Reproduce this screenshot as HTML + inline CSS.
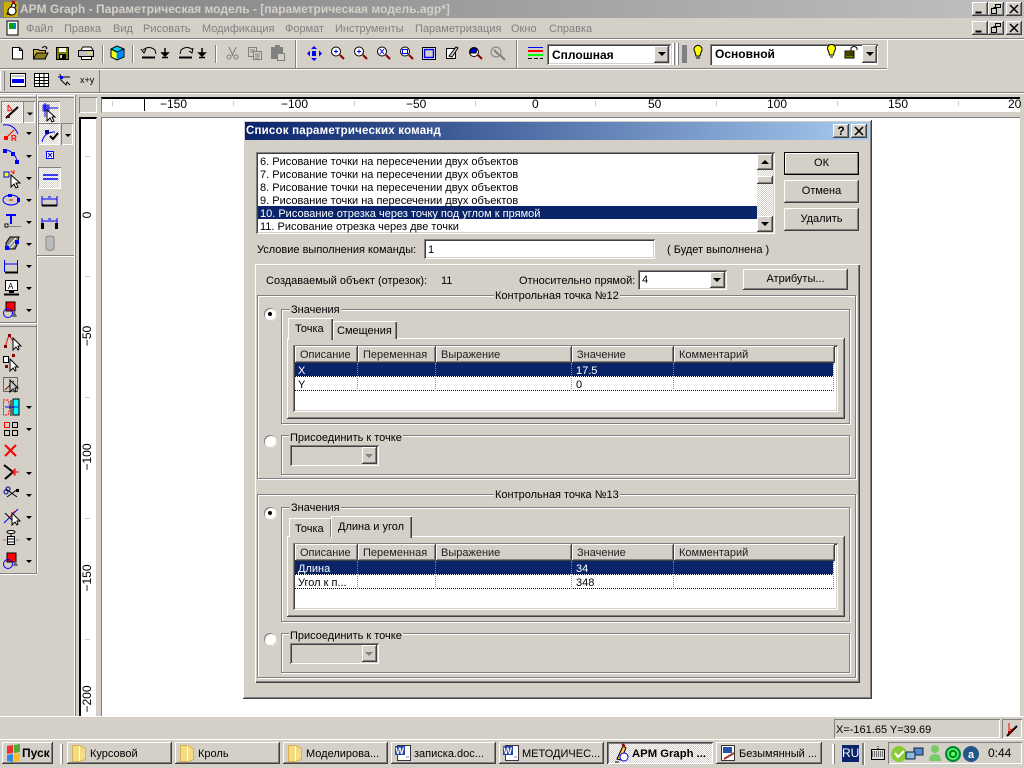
<!DOCTYPE html>
<html lang="ru"><head><meta charset="utf-8"><title>APM Graph</title>
<style>
html,body{margin:0;padding:0;width:1024px;height:768px;overflow:hidden;background:#d4d0c8}
body{position:relative;font:11px/14px "Liberation Sans",sans-serif;color:#000}
div,span.t{position:absolute;box-sizing:border-box}
.t{position:absolute;white-space:nowrap;line-height:14px;margin-top:1px}
.t.r,.t.b{margin-top:0}
.r{font-size:12px}
.up{background:#d4d0c8;box-shadow:inset -1px -1px #404040,inset 1px 1px #fff,inset -2px -2px #808080}
.sk{background:#fff;box-shadow:inset 1px 1px #808080,inset -1px -1px #fff,inset 2px 2px #404040,inset -2px -2px #d4d0c8}
.fr{border:1px solid #808080;box-shadow:1px 1px #fff,inset 1px 1px #fff}
.lbl{background:#d4d0c8;padding:0 1px}
.g{color:#808080}
.btn{text-align:center;line-height:21px}
.h{background:#d4d0c8;height:17px;box-shadow:inset -1px -1px #404040,inset 1px 1px #fff,inset -2px -2px #808080;padding-left:5px;line-height:19px;color:#222}
.tb{height:22px;background:#d4d0c8;box-shadow:inset -1px -1px #404040,inset 1px 1px #fff,inset -2px -2px #808080;line-height:21px}
.dot{border-bottom:1px dotted #000}
.vd{width:0;border-left:1px dotted #000}
.rt{position:absolute;transform:rotate(-90deg);white-space:nowrap;line-height:14px;text-align:center;width:40px;left:67px;font-size:12px}
</style></head><body>

<!-- title bar -->
<div style="left:0;top:0;width:1024px;height:18px;background:linear-gradient(90deg,#808080,#c0c0c0)"></div>
<span class="t b" style="left:20px;top:2px;font-weight:bold;font-size:12px;color:#d4d0c8">APM Graph - Параметрическая модель - [параметрическая модель.agp*]</span>
<div class="up" style="left:972px;top:2px;width:16px;height:14px"></div>
<div class="up" style="left:988px;top:2px;width:16px;height:14px"></div>
<div class="up" style="left:1006px;top:2px;width:16px;height:14px"></div>
<div class="up" style="left:972px;top:21px;width:16px;height:14px"></div>
<div class="up" style="left:988px;top:21px;width:16px;height:14px"></div>
<div class="up" style="left:1006px;top:21px;width:16px;height:14px"></div>

<!-- menu -->
<span class="t g" style="left:26px;top:21px">Файл</span>
<span class="t g" style="left:64px;top:21px">Правка</span>
<span class="t g" style="left:113px;top:21px">Вид</span>
<span class="t g" style="left:143px;top:21px">Рисовать</span>
<span class="t g" style="left:202px;top:21px">Модификация</span>
<span class="t g" style="left:285px;top:21px">Формат</span>
<span class="t g" style="left:335px;top:21px">Инструменты</span>
<span class="t g" style="left:415px;top:21px">Параметризация</span>
<span class="t g" style="left:511px;top:21px">Окно</span>
<span class="t g" style="left:549px;top:21px">Справка</span>

<!-- toolbar lines -->
<div style="left:0;top:38px;width:1024px;height:1px;background:#808080"></div>
<div style="left:0;top:39px;width:1024px;height:1px;background:#fff"></div>
<div style="left:0;top:68px;width:887px;height:1px;background:#808080"></div>
<div style="left:0;top:69px;width:887px;height:1px;background:#fff"></div>
<div style="left:887px;top:40px;width:1px;height:29px;background:#fff"></div>
<div style="left:295px;top:40px;width:1px;height:28px;background:#808080"></div>
<div style="left:296px;top:40px;width:1px;height:28px;background:#fff"></div>
<div style="left:516px;top:40px;width:1px;height:28px;background:#808080"></div>
<div style="left:517px;top:40px;width:1px;height:28px;background:#fff"></div>
<div style="left:102px;top:45px;width:1px;height:18px;background:#808080"></div>
<div style="left:103px;top:45px;width:1px;height:18px;background:#fff"></div>
<div style="left:132px;top:45px;width:1px;height:18px;background:#808080"></div>
<div style="left:133px;top:45px;width:1px;height:18px;background:#fff"></div>
<div style="left:215px;top:45px;width:1px;height:18px;background:#808080"></div>
<div style="left:216px;top:45px;width:1px;height:18px;background:#fff"></div>
<div style="left:1px;top:71px;width:3px;height:20px;background:#d4d0c8;box-shadow:-1px 0 #fff,1px 0 #808080"></div>
<div style="left:99px;top:70px;width:1px;height:22px;background:#808080"></div>
<div style="left:0;top:92px;width:1024px;height:1px;background:#808080"></div>
<div style="left:0;top:93px;width:1024px;height:1px;background:#fff"></div>

<!-- combos on toolbar -->
<div class="sk" style="left:547px;top:44px;width:124px;height:21px"></div>
<span class="t b" style="left:552px;top:48px;font-weight:bold;font-size:12px">Сплошная</span>
<div class="up" style="left:654px;top:46px;width:15px;height:17px"></div>
<div style="left:672px;top:43px;width:2px;height:22px;background:#fff;box-shadow:1px 0 #808080"></div>
<div style="left:676px;top:43px;width:2px;height:22px;background:#fff;box-shadow:1px 0 #808080"></div>
<div style="left:682px;top:45px;width:5px;height:18px;background:#808080"></div>
<div class="sk" style="left:710px;top:44px;width:168px;height:21px;box-shadow:inset 1px 1px #808080,inset 2px 2px #404040,inset -1px -1px #fff"></div>
<span class="t b" style="left:715px;top:47px;font-weight:bold;font-size:12px">Основной</span>
<div class="up" style="left:862px;top:45px;width:15px;height:18px"></div>

<!-- rulers -->
<div class="up" style="left:79px;top:97px;width:18px;height:16px;box-shadow:inset 1px 1px #808080,inset -1px -1px #fff"></div>
<div style="left:101px;top:97px;width:919px;height:16px;background:#fff;border-top:2px solid #000;border-left:1px solid #808080;border-bottom:1px solid #d4d0c8"></div>
<div style="left:79px;top:117px;width:18px;height:599px;background:#fff;border-top:2px solid #000;border-left:2px solid #000;border-right:1px solid #d4d0c8"></div>
<div style="left:101px;top:117px;width:919px;height:599px;background:#fff;box-shadow:inset 1px 1px #808080"></div>
<div style="left:144px;top:97px;width:1px;height:14px;background:#000"></div>
<div style="left:112px;top:101px;width:1px;height:5px;background:#ccc"></div>
<div style="left:233px;top:101px;width:1px;height:5px;background:#ccc"></div>
<div style="left:354px;top:101px;width:1px;height:5px;background:#ccc"></div>
<div style="left:475px;top:101px;width:1px;height:5px;background:#ccc"></div>
<div style="left:595px;top:101px;width:1px;height:5px;background:#ccc"></div>
<div style="left:716px;top:101px;width:1px;height:5px;background:#ccc"></div>
<div style="left:837px;top:101px;width:1px;height:5px;background:#ccc"></div>
<div style="left:958px;top:101px;width:1px;height:5px;background:#ccc"></div>
<span class="t r" style="left:160px;top:97px">−150</span>
<span class="t r" style="left:281px;top:97px">−100</span>
<span class="t r" style="left:406px;top:97px">−50</span>
<span class="t r" style="left:532px;top:97px">0</span>
<span class="t r" style="left:648px;top:97px">50</span>
<span class="t r" style="left:767px;top:97px">100</span>
<span class="t r" style="left:888px;top:97px">150</span>
<span class="t r" style="left:1008px;top:97px">20</span>
<div style="left:85px;top:156px;width:5px;height:1px;background:#ccc"></div>
<div style="left:85px;top:276px;width:5px;height:1px;background:#ccc"></div>
<div style="left:85px;top:397px;width:5px;height:1px;background:#ccc"></div>
<div style="left:85px;top:518px;width:5px;height:1px;background:#ccc"></div>
<div style="left:85px;top:639px;width:5px;height:1px;background:#ccc"></div>
<span class="rt" style="top:208px">0</span>
<span class="rt" style="top:329px">−50</span>
<span class="rt" style="top:450px">−100</span>
<span class="rt" style="top:571px">−150</span>
<span class="rt" style="top:692px">−200</span>

<!-- left toolbars -->
<div style="left:0;top:95px;width:74px;height:1px;background:#fff"></div>
<div style="left:0;top:97px;width:74px;height:1px;background:#808080"></div>
<div style="left:36px;top:95px;width:1px;height:478px;background:#808080"></div>
<div style="left:37px;top:95px;width:1px;height:478px;background:#fff"></div>
<div style="left:74px;top:95px;width:1px;height:621px;background:#fff"></div>
<div style="left:75px;top:95px;width:1px;height:621px;background:#808080"></div>
<div style="left:37px;top:255px;width:37px;height:1px;background:#808080"></div>
<div style="left:37px;top:256px;width:37px;height:1px;background:#fff"></div>
<div style="left:0;top:322px;width:37px;height:1px;background:#808080"></div>
<div style="left:0;top:323px;width:37px;height:1px;background:#fff"></div>
<div style="left:0;top:326px;width:37px;height:1px;background:#808080"></div>
<div style="left:0;top:573px;width:37px;height:1px;background:#808080"></div>
<div style="left:0;top:574px;width:37px;height:1px;background:#fff"></div>
<div style="left:1px;top:101px;width:22px;height:22px;background:repeating-conic-gradient(#fff 0 25%,#d4d0c8 0 50%) 0 0/2px 2px;box-shadow:inset 1px 1px #808080,inset -1px -1px #fff"></div>
<div style="left:23px;top:101px;width:12px;height:22px;box-shadow:inset 1px 1px #808080,inset -1px -1px #fff"></div>
<div style="left:38px;top:101px;width:22px;height:22px;background:repeating-conic-gradient(#fff 0 25%,#d4d0c8 0 50%) 0 0/2px 2px;box-shadow:inset 1px 1px #808080,inset -1px -1px #fff"></div>
<div style="left:38px;top:123px;width:22px;height:22px;background:repeating-conic-gradient(#fff 0 25%,#d4d0c8 0 50%) 0 0/2px 2px;box-shadow:inset 1px 1px #808080,inset -1px -1px #fff"></div>
<div style="left:61px;top:123px;width:12px;height:22px;box-shadow:inset 1px 1px #808080,inset -1px -1px #fff"></div>
<div style="left:38px;top:167px;width:23px;height:22px;background:repeating-conic-gradient(#fff 0 25%,#d4d0c8 0 50%) 0 0/2px 2px;box-shadow:inset 1px 1px #808080,inset -1px -1px #fff"></div>

<!-- status bar -->
<div style="left:0;top:716px;width:1024px;height:1px;background:#fff"></div>
<div style="left:834px;top:719px;width:166px;height:19px;box-shadow:inset 1px 1px #808080,inset -1px -1px #fff"></div>
<span class="t" style="left:836px;top:722px">X=-161.65 Y=39.69</span>
<div style="left:1002px;top:719px;width:20px;height:19px;box-shadow:inset 1px 1px #808080,inset -1px -1px #fff"></div>

<!-- taskbar -->
<div style="left:0;top:739px;width:1024px;height:1px;background:#fff"></div>
<div class="tb" style="left:2px;top:742px;width:51px"></div>
<span class="t b" style="left:22px;top:746px;font-weight:bold;font-size:12px">Пуск</span>
<div style="left:60px;top:744px;width:2px;height:20px;background:#fff;box-shadow:1px 0 #808080"></div>
<div class="tb" style="left:67px;top:742px;width:105px"></div><span class="t" style="left:90px;top:746px">Курсовой</span>
<div class="tb" style="left:175px;top:742px;width:105px"></div><span class="t" style="left:198px;top:746px">Кроль</span>
<div class="tb" style="left:283px;top:742px;width:105px"></div><span class="t" style="left:306px;top:746px">Моделирова...</span>
<div class="tb" style="left:391px;top:742px;width:105px"></div><span class="t" style="left:414px;top:746px">записка.doc...</span>
<div class="tb" style="left:499px;top:742px;width:105px"></div><span class="t" style="left:522px;top:746px">МЕТОДИЧЕС...</span>
<div style="left:607px;top:742px;width:106px;height:22px;background:repeating-conic-gradient(#fff 0 25%,#d4d0c8 0 50%) 0 0/2px 2px;box-shadow:inset 1px 1px #404040,inset -1px -1px #fff,inset 2px 2px #808080"></div>
<span class="t b" style="left:632px;top:747px;font-weight:bold;font-size:11.300px">APM Graph ...</span>
<div class="tb" style="left:716px;top:742px;width:106px"></div><span class="t" style="left:739px;top:746px">Безымянный ...</span>
<div style="left:832px;top:744px;width:2px;height:20px;background:#fff;box-shadow:1px 0 #808080"></div>
<div style="left:842px;top:745px;width:17px;height:17px;background:#0a246a;color:#fff;text-align:center;line-height:17px;font-size:12px">RU</div>
<div style="left:862px;top:743px;width:2px;height:22px;background:#808080;box-shadow:1px 0 #fff"></div>
<div style="left:888px;top:742px;width:134px;height:22px;box-shadow:inset 1px 1px #808080,inset -1px -1px #fff"></div>
<span class="t b" style="left:988px;top:746px;font-size:12px">0:44</span>

<!-- Toolbar / app icon layer -->
<svg style="position:absolute;left:0;top:0" width="1024" height="768" viewBox="0 0 1024 768" fill="none">
<!-- app icons -->
<g><rect x="4" y="2" width="14" height="15" fill="#c8b000"/><path d="M7 14l6-11 3 2-5 10z" fill="#fff" stroke="#000"/><circle cx="12" cy="11" r="4" stroke="#000" fill="#fff"/><path d="M12 1l3 2" stroke="#c00" stroke-width="2"/></g>
<g><rect x="7" y="21" width="11" height="14" fill="#fff" stroke="#000"/><rect x="9" y="23" width="4" height="6" fill="#0a0"/><rect x="13" y="23" width="3" height="6" fill="#08c"/></g>
<!-- window buttons -->
<g stroke="#000"><path d="M975.500 12.500h6M975.500 31.500h6" stroke-width="2"/><path d="M993.500 7.500h7v-3h-5v3M991.500 8.500h5v5h-5zM993.500 26.500h7v-3h-5v3M991.500 27.500h5v5h-5z"/><path d="M1010 5l8 8M1018 5l-8 8M1010 24l8 8M1018 24l-8 8" stroke-width="1.500"/></g>
<!-- new -->
<path d="M12.500 47.500h7l3 3v8.500h-10z" fill="#fff" stroke="#000"/><path d="M19.500 47.500v3h3" stroke="#000"/>
<!-- open -->
<path d="M33.500 49.500h5l1 1h6v8.500h-12z" fill="#c8b34a" stroke="#000"/><path d="M33.500 59l3-6h11.500l-3 6z" fill="#8c7d20" stroke="#000"/><path d="M42 48q3-3 5 0l-1 1" stroke="#000"/>
<!-- save -->
<rect x="56.500" y="47.500" width="12" height="12" fill="#808000" stroke="#000"/><rect x="59" y="48" width="7" height="4" fill="#fff"/><rect x="59" y="54" width="7" height="5" fill="#000"/><rect x="60" y="55" width="2" height="3" fill="#d4d0c8"/>
<!-- print -->
<path d="M81 50l2-3h8l2 3" fill="#fff" stroke="#000"/><rect x="78.500" y="50.500" width="15" height="6" fill="#c0c0c0" stroke="#000"/><rect x="81.500" y="56.500" width="10" height="3" fill="#fff" stroke="#000"/><path d="M88 53h4" stroke="#ff0"/>
<!-- cube -->
<path d="M111 49l6-3 7 3v8l-7 3-6-3z" fill="#0cf" stroke="#000"/><path d="M111 49l6 3 7-3" stroke="#000"/><path d="M111.500 50l5 3v6l-5-2.500z" fill="#ff0"/><path d="M117 53l6-3v7l-6 2.500z" fill="#08f"/>
<!-- undo/redo -->
<g stroke="#000"><path d="M143 50q6-5 12 0l1 4M141 49l3 4 2-4" /><path d="M142 57.500h13" stroke-width="2"/><path d="M162 53h6l-3 3zM165 48v5M162 57.500h6" stroke-width="1.500" fill="#000"/>
<path d="M180 54l1-4q6-5 12 0M193 48l-1 5-3-2"/><path d="M179 57.500h13" stroke-width="2"/><path d="M199 53h6l-3 3zM202 48v5M199 57.500h6" stroke-width="1.500" fill="#000"/></g>
<!-- cut copy paste, disabled -->
<g stroke="#808080"><path d="M229 47l4 9M236 47l-4 9"/><circle cx="229" cy="57" r="2"/><circle cx="236" cy="57" r="2"/><rect x="248.500" y="47.500" width="8" height="9" fill="#d4d0c8"/><rect x="253.500" y="51.500" width="8" height="8" fill="#d4d0c8"/><path d="M250 50h5M250 52h3M255 54h5M255 56h5M255 58h4"/></g>
<rect x="271" y="47" width="12" height="12" fill="#808080"/><rect x="275" y="45" width="5" height="3" fill="#808080"/><rect x="277.500" y="53.500" width="7" height="7" fill="#d4d0c8" stroke="#808080"/>
<!-- move -->
<g fill="#00f"><path d="M314 46l3 3h-6zM314 61l3-3h-6zM307 53.500l3-3v6zM322 53.500l-3-3v6z"/><rect x="312" y="51" width="4" height="5"/></g>
<!-- zooms -->
<g id="z" stroke="#000"><circle cx="336" cy="51.500" r="4.500" fill="#fff"/><path d="M340 55l4 4" stroke="#800" stroke-width="2"/><path d="M334 51.500h4M336 49.500v4" stroke="#00f"/></g>
<g stroke="#000"><circle cx="359" cy="51.500" r="4.500" fill="#fff"/><path d="M363 55l4 4" stroke="#800" stroke-width="2"/><path d="M357 51.500h4M359 49.500v4" stroke="#00f"/></g>
<g stroke="#000"><circle cx="382" cy="51.500" r="4.500" fill="#fff"/><path d="M386 55l4 4" stroke="#800" stroke-width="2"/><path d="M380 49l4 5M384 49l-4 5" stroke="#00f"/></g>
<g stroke="#000"><circle cx="405" cy="51.500" r="4.500" fill="#fff"/><path d="M409 55l4 4" stroke="#800" stroke-width="2"/><rect x="402.500" y="49.500" width="5" height="4" stroke="#00f"/></g>
<rect x="422.500" y="47.500" width="13" height="12" stroke="#000" fill="#fff"/><rect x="424.500" y="49.500" width="9" height="8" stroke="#00f" stroke-width="1.500" fill="#d4d0c8"/>
<path d="M446.500 48.500h9v10h-9z" fill="#fff" stroke="#000"/><path d="M449 56l7-9 2 1-6 9z" fill="#d4d0c8" stroke="#000"/>
<g stroke="#000"><circle cx="474" cy="52" r="4.500" fill="#fff"/><path d="M470 53a4.500 4.500 0 0 1 7-4l-1 4z" fill="#00f"/><path d="M478 55l4 4" stroke="#800" stroke-width="2"/></g>
<g stroke="#808080"><circle cx="496" cy="52" r="5" fill="#d4d0c8"/><path d="M494 50l5 5M500 55l5 5" stroke-width="2"/></g>
<!-- line types -->
<path d="M528 47.500h15" stroke="#00f"/><path d="M528 51h15" stroke="#f00" stroke-width="2"/><path d="M528 55h15" stroke="#0f0" stroke-width="2"/><path d="M528 58.500h15" stroke="#000" stroke-dasharray="4 2"/>
<!-- combo arrows -->
<path d="M658 52h8l-4 4z" fill="#000"/><path d="M866 52h8l-4 4z" fill="#000"/>
<!-- bulbs, lock -->
<g stroke="#000"><path d="M695 52a4 4 0 1 1 6 0l-1 4h-4z" fill="#ff0"/><path d="M696 58h4"/><path d="M828.500 51a4 4 0 1 1 6 0l-1 4h-4z" fill="#ff0"/><path d="M830 57h3"/></g>
<rect x="845" y="51" width="9" height="7" fill="#808000" stroke="#000"/><path d="M846 53h8M846 55h8M851 51v-3q3-3 6 0v2" stroke="#000"/>
<!-- toolbar 2 -->
<rect x="10.500" y="73.500" width="15" height="13" fill="#fff" stroke="#000"/><rect x="12" y="79" width="12" height="4" fill="#00f"/><path d="M12 76h12" stroke="#888"/>
<rect x="34.500" y="73.500" width="14" height="13" fill="#fff" stroke="#000"/><path d="M34 77.500h15M34 80.500h15M34 83.500h15M39.500 74v12M44 74v12" stroke="#000"/>
<path d="M60 74l1 6 5 5 1-3 3 3M58 77h12" stroke="#000"/><rect x="60" y="76" width="3" height="3" fill="#00f"/>
<text x="80" y="83" font-family="Liberation Sans,sans-serif" font-size="9" fill="#000">x+y</text>
<!-- left col 1 -->
<g stroke="#000"><path d="M6 118L18 107" stroke-width="2"/></g><path d="M8 105v6l4-1-4-5" stroke="#f00"/><rect x="7" y="115" width="3" height="3" fill="#800"/>
<path d="M3 125q10-2 15 9" stroke="#00f"/><path d="M6 138l8-8M9 132" stroke="#f00"/><rect x="4" y="136" width="4" height="4" fill="#f00"/><text x="11" y="141" font-family="Liberation Sans,sans-serif" font-size="8" font-weight="bold" fill="#f00">R</text>
<path d="M5 150q8 0 12 10" stroke="#00f"/><rect x="3" y="149" width="4" height="4" fill="#00f"/><rect x="11" y="152" width="4" height="4" fill="#00f"/><rect x="15" y="160" width="4" height="4" fill="#00f"/>
<rect x="4" y="172" width="5" height="5" fill="#ff0" stroke="#00f"/><path d="M11 175l0 12 3-3 2 4 2-1-2-4h4z" fill="#fff" stroke="#000"/><path d="M11 171l3 3M14 170v3" stroke="#f00"/>
<ellipse cx="11" cy="200" rx="8" ry="5" stroke="#00f"/><rect x="8" y="194" width="4" height="3" fill="#00f"/><rect x="17" y="198" width="3" height="4" fill="#00f"/><path d="M9 200h4" stroke="#f00"/>
<path d="M6 215h10M11 215v9" stroke="#00f" stroke-width="2"/><rect x="5" y="224" width="3" height="3" fill="#fff" stroke="#000"/><path d="M8 226.500h13" stroke="#888"/>
<path d="M6 243l4-6h9l-2 8-2 4H6z" fill="#888" stroke="#000"/><path d="M8 247l8-9M11 248l7-8" stroke="#fff"/><rect x="5" y="246" width="4" height="4" fill="#00f"/><rect x="15" y="240" width="4" height="4" fill="#00f"/>
<path d="M4.500 260v12M17.500 260v12M5 264h12" stroke="#00f"/><path d="M5 272.500h13" stroke="#000" stroke-width="2"/>
<rect x="5.500" y="280.500" width="12" height="10" fill="#fff" stroke="#000"/><text x="8" y="289" font-family="Liberation Sans,sans-serif" font-size="8" fill="#000">A</text><path d="M4 294.500h15M9 292h5" stroke="#000" stroke-width="2"/>
<rect x="6" y="302" width="9" height="9" fill="#f00" stroke="#000"/><circle cx="8" cy="313" r="4.500" stroke="#00f"/><path d="M12 317l2-8 3 8z" fill="#667"/>
<!-- left arrows -->
<g fill="#000"><path d="M27 112.500h6l-3 3z M26 132h6l-3 3zM26 155h6l-3 3zM26 177h6l-3 3zM26 199h6l-3 3zM26 221h6l-3 3zM26 243h6l-3 3zM26 265h6l-3 3zM26 287h6l-3 3zM26 309h6l-3 3zM26 406h6l-3 3zM26 428h6l-3 3zM26 472h6l-3 3zM26 494h6l-3 3zM26 516h6l-3 3zM26 538h6l-3 3zM26 560h6l-3 3zM65 134h6l-3 3z"/></g>
<!-- left block 2 -->
<path d="M5 347l4-12 4 6" stroke="#f00"/><rect x="4" y="345" width="3" height="3" fill="#800"/><rect x="8" y="334" width="3" height="3" fill="#800"/><path d="M13 338v12l3-3 2 3 1-1-1-3h3z" fill="#fff" stroke="#000"/>
<rect x="3.500" y="356.500" width="5" height="6" fill="#fff" stroke="#000"/><rect x="12" y="354" width="3" height="3" fill="#800"/><rect x="5" y="365" width="3" height="3" fill="#800"/><path d="M10 359v12l3-3 2 3 1-1-1-3h3z" fill="#fff" stroke="#000"/>
<rect x="3.500" y="377.500" width="14" height="14" stroke="#000" stroke-dasharray="1 1"/><path d="M5 390l9-9" stroke="#800"/><path d="M10 380v12l3-3 2 3 1-1-1-3h3z" fill="#ccc" stroke="#000"/>
<path d="M8 400H3.500v15H8q3-8 0-15z" stroke="#f00" stroke-dasharray="2 1"/><path d="M13 399h6v16h-6z" fill="#0ff" stroke="#000"/><path d="M5 407h13" stroke="#00f"/><path d="M11 400v16" stroke="#000"/>
<rect x="4.500" y="422.500" width="5" height="5" stroke="#f00"/><rect x="12.500" y="422.500" width="5" height="5" stroke="#000"/><rect x="4.500" y="430.500" width="5" height="5" stroke="#000"/><rect x="12.500" y="430.500" width="5" height="5" stroke="#000"/>
<path d="M5 445l11 11M16 445l-11 11" stroke="#f00" stroke-width="2"/>
<path d="M4 465l9 7-8 7" stroke="#000" stroke-width="2"/><path d="M12 472l3-3v6zM15 472h4" stroke="#f00"/>
<path d="M6 489l11 8M18 489l-11 8" stroke="#000"/><circle cx="6" cy="492" r="2" stroke="#008"/><circle cx="8" cy="489" r="2" stroke="#008"/><rect x="16" y="489" width="3" height="3" fill="#000"/>
<path d="M4 523l14-14" stroke="#00f"/><path d="M5 513l8 8" stroke="#000"/><path d="M10 517l5-6" stroke="#f00"/><path d="M12 513v12l3-3 2 3 1-1-1-3h3z" fill="#fff" stroke="#000"/>
<path d="M10 532h2" stroke="#000" stroke-width="2"/><ellipse cx="11" cy="532" rx="4" ry="1.500" fill="#fff" stroke="#000"/><path d="M11 533v3" stroke="#000"/><rect x="7.500" y="536.500" width="7" height="8" fill="#fff" stroke="#000"/><path d="M7 539h8M7 542h8" stroke="#000"/><path d="M3 540h3M16 540h3" stroke="#888"/>
<rect x="7" y="553" width="9" height="9" fill="#f00" stroke="#000"/><circle cx="8" cy="564" r="4.500" stroke="#00f"/><path d="M13 566l2-6 3 6z" fill="#667"/>
<!-- left col 2 -->
<rect x="43" y="105" width="6" height="6" fill="#00f" opacity=".7" stroke="#008"/><path d="M45 103v14M49 108h9" stroke="#00f"/><path d="M47 110v11l3-3 2 4 2-1-2-4h3z" fill="#fff" stroke="#000"/>
<path d="M42 142q2-10 13-10" stroke="#00f"/><rect x="45" y="130" width="4" height="4" fill="#008"/><path d="M50 136l3 3 5-6" stroke="#000" stroke-width="2"/>
<rect x="46.500" y="151.500" width="7" height="7" stroke="#00f" fill="#fff"/><path d="M48 153l4 4M52 153l-4 4" stroke="#00f"/>
<path d="M43 175h15M43 179h15" stroke="#00f" stroke-width="1.500"/>
<path d="M42 196v10M57 196v10M42 199h15" stroke="#00f"/><path d="M42 205.500h15" stroke="#000" stroke-width="2"/><path d="M48 197h3" stroke="#00f"/>
<path d="M42 218v10M57 218v10M42 221h15" stroke="#00f"/><rect x="41" y="223" width="3" height="6" fill="#000"/><rect x="55" y="223" width="3" height="6" fill="#000"/><path d="M48 219h3" stroke="#00f"/>
<path d="M46 237q4-2 8 0v12q-4 3-8 0z" fill="#bbb" stroke="#888"/>
<!-- status icon -->
<path d="M1007 736l10-10" stroke="#000" stroke-width="2"/><path d="M1009 723v7l4-1" stroke="#f00"/><rect x="1008" y="731" width="3" height="3" fill="#800"/>
<!-- taskbar icons -->
<g><path d="M7 746l6-1v8l-6 1z" fill="#e33"/><path d="M14 745l6-1v8l-6 1z" fill="#5a3"/><path d="M7 755l6-1v8l-6-1z" fill="#38d"/><path d="M14 754l6-1v8l-6 1z" fill="#fb2"/></g>
<g fill="#f4dc84" stroke="#d8b050"><path d="M72.500 745.500h7l6 3v11l-6 2h-7z"/><path d="M180.500 745.500h7l6 3v11l-6 2h-7z"/><path d="M288.500 745.500h7l6 3v11l-6 2h-7z"/></g>
<path d="M79.500 746v15M187.500 746v15M295.500 746v15" stroke="#fff"/>
<g font-family="Liberation Sans,sans-serif" font-size="9" font-weight="bold" fill="#fff"><rect x="397.500" y="745.500" width="13" height="15" fill="#fff" stroke="#334"/><rect x="395" y="746" width="10" height="9" fill="#24a"/><text x="395.500" y="754">W</text><rect x="505.500" y="745.500" width="13" height="15" fill="#fff" stroke="#334"/><rect x="503" y="746" width="10" height="9" fill="#24a"/><text x="503.500" y="754">W</text><path d="M406 757h3M514 757h3" stroke="#88a"/></g>
<path d="M617 759l6-13 3 2-5 12zM615 762h4" stroke="#000" fill="#fc4"/><circle cx="624" cy="757" r="4" stroke="#00f" fill="#fff"/><path d="M622 744l3 2" stroke="#a00" stroke-width="2"/>
<rect x="721.500" y="745.500" width="13" height="15" fill="#fff" stroke="#333"/><rect x="723" y="747" width="9" height="6" fill="#25a"/><path d="M724 759l10-6" stroke="#a33" stroke-width="2"/>
<!-- tray -->
<rect x="871.500" y="749.500" width="13" height="10" fill="#ddd" stroke="#000"/><path d="M872 752h13M872 754h13M872 756h13M878 746v3" stroke="#000" stroke-dasharray="1 1"/>
<circle cx="899" cy="754" r="8" fill="#8c3"/><path d="M895 753l3 4 6-6" stroke="#fff" stroke-width="2"/>
<rect x="914" y="748" width="9" height="7" fill="#58c" stroke="#124"/><rect x="906" y="752" width="9" height="7" fill="#8bd" stroke="#124"/>
<circle cx="935" cy="749" r="4" fill="#7c6"/><path d="M929 761q0-7 6-7t6 7z" fill="#7c6"/>
<circle cx="953" cy="754" r="8" fill="#083"/><circle cx="953" cy="754" r="5" stroke="#6f6" stroke-width="1.500"/><circle cx="953" cy="754" r="2" fill="#6f6"/>
<circle cx="971" cy="754" r="8" fill="#258"/><text x="968" y="758" font-family="Liberation Sans,sans-serif" font-size="11" font-weight="bold" fill="#fff">a</text>
</svg>

<!-- dialog -->
<div style="left:243px;top:120px;width:629px;height:579px;background:#d4d0c8;box-shadow:inset -1px -1px #404040,inset 1px 1px #fff,inset -2px -2px #808080"></div>
<div style="left:245px;top:122px;width:624px;height:18px;background:linear-gradient(90deg,#0a246a,#a6caf0)"></div>
<span class="t b" style="left:246px;top:124px;font-weight:bold;font-size:11.500px;color:#fff;letter-spacing:.2px">Список параметрических команд</span>
<div class="up btn" style="left:833px;top:124px;width:16px;height:14px;font-weight:bold;line-height:14px;font-size:12px">?</div>
<div class="up" style="left:851px;top:124px;width:16px;height:14px"></div>
<svg style="position:absolute;left:851px;top:124px" width="16" height="14"><path d="M4 3l8 8M12 3l-8 8" stroke="#000" stroke-width="1.500"/></svg>

<!-- list -->
<div class="sk" style="left:256px;top:152px;width:519px;height:82px"></div>
<div style="left:258px;top:206px;width:499px;height:13px;background:#0a246a"></div>
<span class="t" style="left:260px;top:154px">6. Рисование точки на пересечении двух объектов</span>
<span class="t" style="left:260px;top:167px">7. Рисование точки на пересечении двух объектов</span>
<span class="t" style="left:260px;top:180px">8. Рисование точки на пересечении двух объектов</span>
<span class="t" style="left:260px;top:193px">9. Рисование точки на пересечении двух объектов</span>
<span class="t" style="left:260px;top:206px;color:#fff">10. Рисование отрезка через точку под углом к прямой</span>
<span class="t" style="left:260px;top:219px">11. Рисование отрезка через две точки</span>
<div style="left:757px;top:154px;width:16px;height:78px;background:repeating-conic-gradient(#fff 0 25%,#d4d0c8 0 50%) 0 0/2px 2px"></div>
<div class="up" style="left:757px;top:154px;width:16px;height:16px"></div>
<div class="up" style="left:757px;top:176px;width:16px;height:8px"></div>
<div class="up" style="left:757px;top:216px;width:16px;height:16px"></div>
<svg style="position:absolute;left:757px;top:154px" width="16" height="78"><path d="M4 10h8l-4-4zM4 68h8l-4 4z" fill="#000"/></svg>

<!-- buttons -->
<div class="up btn" style="left:784px;top:152px;width:75px;height:23px;box-shadow:0 0 0 0 #000,inset 0 0 0 1px #000,inset -2px -2px #808080,inset 2px 2px #fff;line-height:23px">ОК</div>
<div class="up btn" style="left:784px;top:180px;width:75px;height:23px;line-height:23px">Отмена</div>
<div class="up btn" style="left:784px;top:208px;width:75px;height:23px;line-height:23px">Удалить</div>

<!-- condition -->
<span class="t" style="left:257px;top:242px">Условие выполнения команды:</span>
<div class="sk" style="left:424px;top:239px;width:231px;height:20px"></div>
<span class="t" style="left:428px;top:242px">1</span>
<span class="t" style="left:667px;top:242px">( Будет выполнена )</span>

<!-- outer group -->
<div style="left:255px;top:264px;width:605px;height:419px;box-shadow:inset 1px 1px #fff,inset -1px -1px #404040,inset -2px -2px #808080"></div>
<span class="t" style="left:266px;top:273px">Создаваемый объект (отрезок):</span>
<span class="t" style="left:441px;top:273px">11</span>
<span class="t" style="left:519px;top:273px">Относительно прямой:</span>
<div class="sk" style="left:638px;top:270px;width:89px;height:20px"></div>
<span class="t" style="left:642px;top:272px">4</span>
<div class="up" style="left:710px;top:272px;width:15px;height:16px"></div>
<svg style="position:absolute;left:710px;top:272px" width="15" height="16"><path d="M3 6h8l-4 4z" fill="#000"/></svg>
<div class="up btn" style="left:743px;top:269px;width:105px;height:21px">Атрибуты...</div>

<!-- control point 12 -->
<div class="fr" style="left:257px;top:295px;width:599px;height:184px"></div>
<span class="t lbl" style="left:494px;top:288px">Контрольная точка №12</span>
<div style="left:264px;top:308px;width:12px;height:12px;border-radius:50%;background:#fff;box-shadow:inset 1px 1px #808080,0 0 0 1px #d4d0c8,1px 1px #fff"></div>
<div style="left:268px;top:312px;width:4px;height:4px;border-radius:50%;background:#000"></div>
<div class="fr" style="left:281px;top:309px;width:569px;height:115px"></div>
<span class="t lbl" style="left:290px;top:302px">Значения</span>
<div class="up" style="left:287px;top:338px;width:558px;height:81px;box-shadow:inset -1px -1px #404040,inset 1px 1px #fff,inset -2px -2px #808080"></div>
<div style="left:333px;top:321px;width:64px;height:18px;background:#d4d0c8;box-shadow:inset 1px 1px #fff,inset -1px 0 #404040,inset -2px 0 #808080"></div>
<span class="t" style="left:337px;top:323px">Смещения</span>
<div style="left:288px;top:318px;width:45px;height:22px;background:#d4d0c8;box-shadow:inset 1px 1px #fff,inset -1px 0 #404040,inset -2px 0 #808080"></div>
<span class="t" style="left:295px;top:321px">Точка</span>
<div class="sk" style="left:293px;top:345px;width:545px;height:67px"></div>
<div class="h" style="left:295px;top:346px;width:63px">Описание</div>
<div class="h" style="left:358px;top:346px;width:78px">Переменная</div>
<div class="h" style="left:436px;top:346px;width:136px">Выражение</div>
<div class="h" style="left:572px;top:346px;width:102px">Значение</div>
<div class="h" style="left:674px;top:346px;width:161px">Комментарий</div>
<div style="left:295px;top:363px;width:538px;height:13px;background:#0a246a"></div>
<div class="dot" style="left:295px;top:376px;width:539px;height:1px"></div>
<div class="dot" style="left:295px;top:390px;width:539px;height:1px"></div>
<div class="vd" style="left:357px;top:363px;height:28px;border-color:#888"></div>
<div class="vd" style="left:435px;top:363px;height:28px;border-color:#888"></div>
<div class="vd" style="left:571px;top:363px;height:28px;border-color:#888"></div>
<div class="vd" style="left:673px;top:363px;height:28px;border-color:#888"></div>
<div class="vd" style="left:833px;top:363px;height:28px;border-color:#888"></div>
<span class="t" style="left:298px;top:363px;color:#fff">X</span>
<span class="t" style="left:298px;top:377px">Y</span>
<span class="t" style="left:576px;top:363px;color:#fff">17.5</span>
<span class="t" style="left:576px;top:377px">0</span>
<div style="left:264px;top:435px;width:12px;height:12px;border-radius:50%;background:#fff;box-shadow:inset 1px 1px #808080,0 0 0 1px #d4d0c8,1px 1px #fff"></div>
<div class="fr" style="left:281px;top:435px;width:569px;height:40px"></div>
<span class="t lbl" style="left:289px;top:430px">Присоединить к точке</span>
<div class="sk" style="left:290px;top:445px;width:89px;height:21px;background:#d4d0c8"></div>
<div class="up" style="left:362px;top:447px;width:15px;height:17px"></div>
<svg style="position:absolute;left:362px;top:447px" width="15" height="17"><path d="M3 7h8l-4 4z" fill="#808080"/></svg>

<!-- control point 13 -->
<div class="fr" style="left:257px;top:494px;width:599px;height:184px"></div>
<span class="t lbl" style="left:494px;top:487px">Контрольная точка №13</span>
<div style="left:264px;top:507px;width:12px;height:12px;border-radius:50%;background:#fff;box-shadow:inset 1px 1px #808080,0 0 0 1px #d4d0c8,1px 1px #fff"></div>
<div style="left:268px;top:511px;width:4px;height:4px;border-radius:50%;background:#000"></div>
<div class="fr" style="left:281px;top:507px;width:569px;height:115px"></div>
<span class="t lbl" style="left:290px;top:500px">Значения</span>
<div class="up" style="left:287px;top:536px;width:558px;height:81px"></div>
<div style="left:289px;top:518px;width:42px;height:19px;background:#d4d0c8;box-shadow:inset 1px 1px #fff,inset -1px 0 #808080"></div>
<span class="t" style="left:295px;top:521px">Точка</span>
<div style="left:331px;top:516px;width:81px;height:22px;background:#d4d0c8;box-shadow:inset 1px 1px #fff,inset -1px 0 #404040,inset -2px 0 #808080"></div>
<span class="t" style="left:338px;top:519px">Длина и угол</span>
<div class="sk" style="left:293px;top:543px;width:545px;height:67px"></div>
<div class="h" style="left:295px;top:544px;width:63px">Описание</div>
<div class="h" style="left:358px;top:544px;width:78px">Переменная</div>
<div class="h" style="left:436px;top:544px;width:136px">Выражение</div>
<div class="h" style="left:572px;top:544px;width:102px">Значение</div>
<div class="h" style="left:674px;top:544px;width:161px">Комментарий</div>
<div style="left:295px;top:561px;width:538px;height:13px;background:#0a246a"></div>
<div class="dot" style="left:295px;top:574px;width:539px;height:1px"></div>
<div class="dot" style="left:295px;top:588px;width:539px;height:1px"></div>
<div class="vd" style="left:357px;top:561px;height:28px;border-color:#888"></div>
<div class="vd" style="left:435px;top:561px;height:28px;border-color:#888"></div>
<div class="vd" style="left:571px;top:561px;height:28px;border-color:#888"></div>
<div class="vd" style="left:673px;top:561px;height:28px;border-color:#888"></div>
<div class="vd" style="left:833px;top:561px;height:28px;border-color:#888"></div>
<span class="t" style="left:298px;top:561px;color:#fff">Длина</span>
<span class="t" style="left:298px;top:575px">Угол к п...</span>
<span class="t" style="left:576px;top:561px;color:#fff">34</span>
<span class="t" style="left:576px;top:575px">348</span>
<div style="left:264px;top:633px;width:12px;height:12px;border-radius:50%;background:#fff;box-shadow:inset 1px 1px #808080,0 0 0 1px #d4d0c8,1px 1px #fff"></div>
<div class="fr" style="left:281px;top:633px;width:569px;height:40px"></div>
<span class="t lbl" style="left:289px;top:628px">Присоединить к точке</span>
<div class="sk" style="left:290px;top:643px;width:89px;height:21px;background:#d4d0c8"></div>
<div class="up" style="left:362px;top:645px;width:15px;height:17px"></div>
<svg style="position:absolute;left:362px;top:645px" width="15" height="17"><path d="M3 7h8l-4 4z" fill="#808080"/></svg>

</body></html>
